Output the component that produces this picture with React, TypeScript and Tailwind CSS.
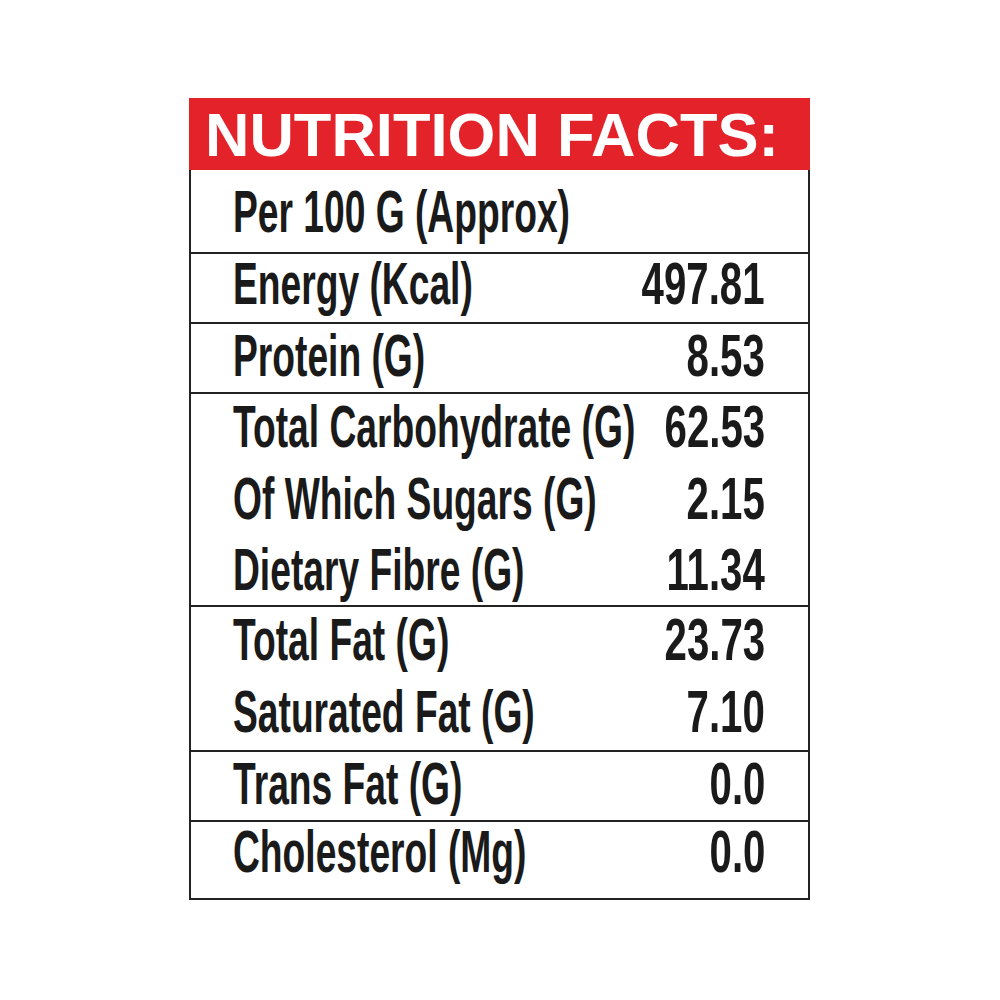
import React from "react";

type Line = { label: string; value?: string };
type Group = { lines: Line[]; h: string; pt: string; gap: string; last?: boolean };

const groups: Group[] = [
  { lines: [{ label: "Per 100 G (Approx)" }], h: "h-[84px]", pt: "pt-[12px]", gap: "gap-0" },
  { lines: [{ label: "Energy (Kcal)", value: "497.81" }], h: "h-[70px]", pt: "pt-0", gap: "gap-0" },
  { lines: [{ label: "Protein (G)", value: "8.53" }], h: "h-[70px]", pt: "pt-[2px]", gap: "gap-0" },
  {
    lines: [
      { label: "Total Carbohydrate (G)", value: "62.53" },
      { label: "Of Which Sugars (G)", value: "2.15" },
      { label: "Dietary Fibre (G)", value: "11.34" },
    ],
    h: "h-[213px]",
    pt: "pt-[3px]",
    gap: "gap-[11.5px]",
  },
  {
    lines: [
      { label: "Total Fat (G)", value: "23.73" },
      { label: "Saturated Fat (G)", value: "7.10" },
    ],
    h: "h-[145px]",
    pt: "pt-[3px]",
    gap: "gap-[12px]",
  },
  { lines: [{ label: "Trans Fat (G)", value: "0.0" }], h: "h-[70px]", pt: "pt-[2px]", gap: "gap-0" },
  { lines: [{ label: "Cholesterol (Mg)", value: "0.0" }], h: "h-[76px]", pt: "pt-0", gap: "gap-0", last: true },
];

function Row({ line }: { line: Line }) {
  return (
    <div className="flex h-[60px] items-start pl-[42px] pr-[43px] text-[60px] font-bold leading-[60px] text-[#1a1a1a]">
      <div className="min-w-0 flex-1 whitespace-nowrap">
        <span className="inline-block origin-left scale-x-[0.62]">{line.label}</span>
      </div>
      {line.value && (
        <div className="shrink-0 whitespace-nowrap text-right">
          <span className="inline-block origin-right scale-x-[0.67]">{line.value}</span>
        </div>
      )}
    </div>
  );
}

export default function App() {
  return (
    <div
      className="min-h-[1000px] bg-white pt-[98px]"
      style={{ fontFamily: '"Liberation Sans", Arial, sans-serif' }}
    >
      <div className="ml-[189px] w-[621px]">
        <div className="h-[72px] bg-[#e3222a] pl-[16px] pt-[2px] text-[61.5px] font-bold leading-[70px] whitespace-nowrap text-white">
          NUTRITION FACTS:
        </div>
        <div className="border-2 border-t-0 border-[#222222]">
          {groups.map((g, i) => (
            <div
              key={i}
              className={`flex flex-col ${g.h} ${g.pt} ${g.gap} ${g.last ? "" : "border-b-2 border-[#222222]"}`}
            >
              {g.lines.map((l, j) => (
                <Row key={j} line={l} />
              ))}
            </div>
          ))}
        </div>
      </div>
    </div>
  );
}
